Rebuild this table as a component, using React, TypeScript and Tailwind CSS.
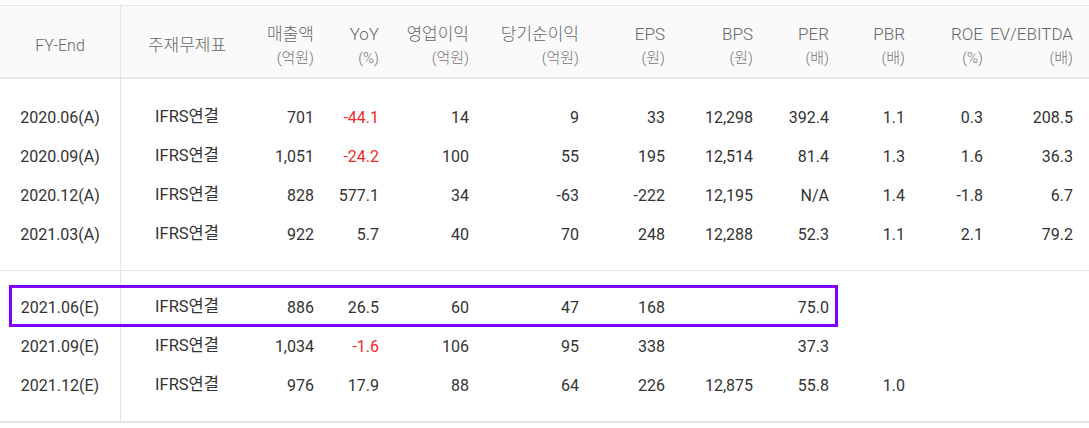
import React from 'react';

// --- Data ---
interface Row {
  period: string;
  values: string[];
}

const columns: { label: string; unit?: string }[] = [
  { label: '매출액', unit: '(억원)' },
  { label: 'YoY', unit: '(%)' },
  { label: '영업이익', unit: '(억원)' },
  { label: '당기순이익', unit: '(억원)' },
  { label: 'EPS', unit: '(원)' },
  { label: 'BPS', unit: '(원)' },
  { label: 'PER', unit: '(배)' },
  { label: 'PBR', unit: '(배)' },
  { label: 'ROE', unit: '(%)' },
  { label: 'EV/EBITDA', unit: '(배)' },
];

const actual: Row[] = [
  { period: '2020.06(A)', values: ['701', '-44.1', '14', '9', '33', '12,298', '392.4', '1.1', '0.3', '208.5'] },
  { period: '2020.09(A)', values: ['1,051', '-24.2', '100', '55', '195', '12,514', '81.4', '1.3', '1.6', '36.3'] },
  { period: '2020.12(A)', values: ['828', '577.1', '34', '-63', '-222', '12,195', 'N/A', '1.4', '-1.8', '6.7'] },
  { period: '2021.03(A)', values: ['922', '5.7', '40', '70', '248', '12,288', '52.3', '1.1', '2.1', '79.2'] },
];

const estimate: Row[] = [
  { period: '2021.06(E)', values: ['886', '26.5', '60', '47', '168', '', '75.0', '', '', ''] },
  { period: '2021.09(E)', values: ['1,034', '-1.6', '106', '95', '338', '', '37.3', '', '', ''] },
  { period: '2021.12(E)', values: ['976', '17.9', '88', '64', '226', '12,875', '55.8', '1.0', '', ''] },
];

const grid = 'grid grid-cols-[121px_132px_77px_65px_90px_110px_86px_88px_76px_76px_78px_90px]';

const DataRow: React.FC<{ row: Row }> = ({ row }) => (
  <div className={`${grid} h-[39px] items-center text-[16px] text-[#333]`}>
    <div className="border-r border-[#e5e5e5] h-full flex items-center justify-center">{row.period}</div>
    <div className="text-center text-[16.5px]">IFRS연결</div>
    {row.values.map((v, i) => (
      <div
        key={i}
        className={`text-right pr-4 ${i === 1 && v.startsWith('-') ? 'text-[#f02a2a]' : ''}`}
      >
        {v}
      </div>
    ))}
  </div>
);

const Spacer: React.FC<{ h: string }> = ({ h }) => (
  <div className={`${grid} ${h}`}>
    <div className="border-r border-[#e5e5e5]" />
  </div>
);

export default function App() {
  return (
    <div
      className="w-[1089px] h-[428px] bg-white pt-[5px]"
      style={{ fontFamily: 'Roboto, "Noto Sans CJK KR", sans-serif' }}
    >
      {/* header */}
      <div className={`${grid} h-[74px] bg-[#fafafa] border-t border-b-2 border-[#e6e6e6] text-[#666] font-light`}>
        <div className="border-r border-[#e5e5e5] flex items-center justify-center text-[16px] pt-2">
          FY-End
        </div>
        <div className="flex items-center justify-center text-[17px] pt-2">주재무제표</div>
        {columns.map((c) => (
          <div key={c.label} className="flex flex-col items-end justify-center pr-4 pt-2 leading-[24px]">
            <span className="text-[17px] whitespace-nowrap">{c.label}</span>
            <span className="text-[15px] text-[#777]">{c.unit}</span>
          </div>
        ))}
      </div>

      {/* actual */}
      <Spacer h="h-[19px]" />
      {actual.map((r) => (
        <DataRow key={r.period} row={r} />
      ))}
      <Spacer h="h-[16px]" />

      {/* estimate */}
      <div className="border-t border-[#e5e5e5]">
        <Spacer h="h-[17px]" />
        <div className="relative">
          <DataRow row={estimate[0]} />
          <div className="absolute left-[9px] w-[829px] -top-[3px] h-[42px] border-[3px] border-[#8000ff] pointer-events-none" />
        </div>
        {estimate.slice(1).map((r) => (
          <DataRow key={r.period} row={r} />
        ))}
        <Spacer h="h-[16px]" />
      </div>
      <div className="border-t-2 border-[#e6e6e6]" />
    </div>
  );
}
